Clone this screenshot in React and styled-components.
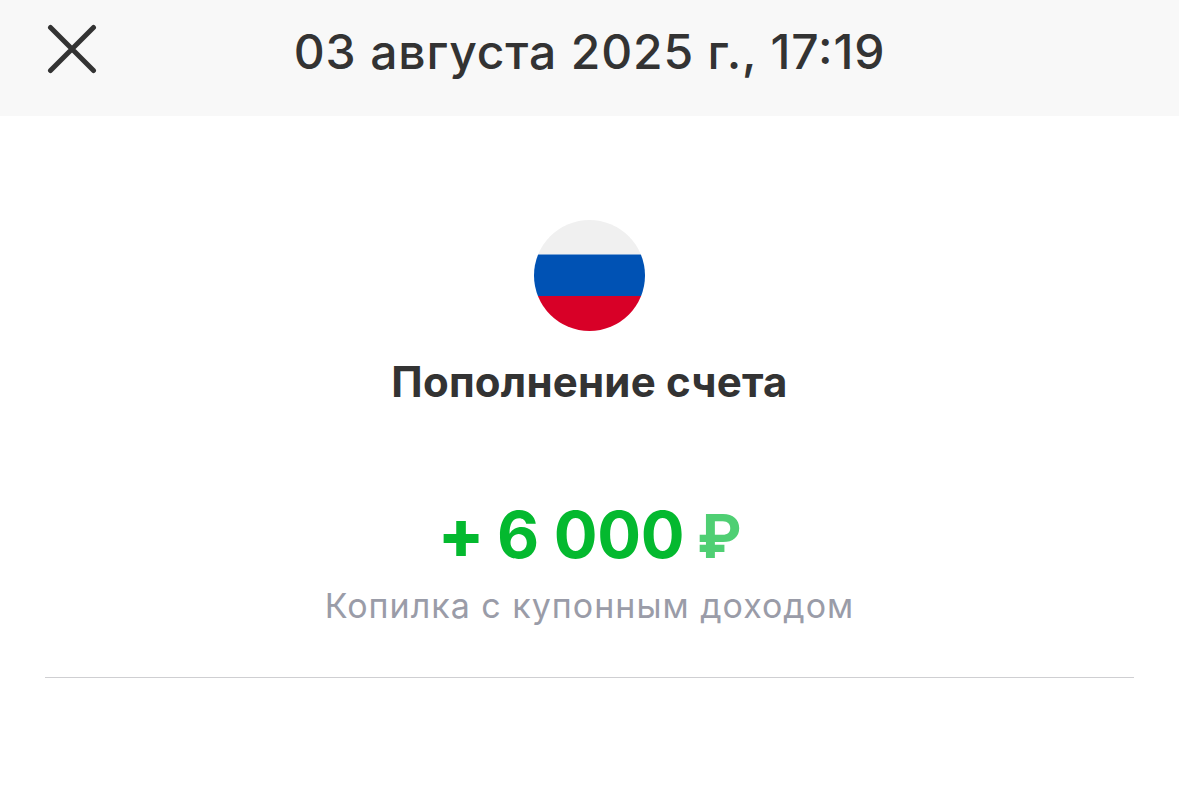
import styled, { createGlobalStyle } from 'styled-components';

const GlobalStyle = createGlobalStyle`
  html, body {
    margin: 0;
    padding: 0;
    height: 100%;
    background: #fff;
    font-family: Inter, "Noto Sans", "Liberation Sans", sans-serif;
  }
`;

const Page = styled.div`
  display: flex;
  flex-flow: column nowrap;
  height: 797px;
  overflow: hidden;
`;

const Header = styled.header`
  position: relative;
  display: flex;
  justify-content: center;
  align-items: center;
  height: 116px;
  background: #f8f8f8;
`;

const CloseButton = styled.button`
  position: absolute;
  left: 47px;
  top: 24px;
  display: block;
  width: 50px;
  height: 50px;
  padding: 0;
  border: 0;
  background: none;
`;

const DateTitle = styled.h1`
  margin: 0 0 13px;
  font-size: 48px;
  font-weight: 500;
  line-height: 56px;
  letter-spacing: 0.85px;
  font-feature-settings: "calt" 1;
  color: #333;
`;

const Operation = styled.section`
  display: flex;
  flex-flow: column nowrap;
  align-items: center;
  margin: 0 45px;
  padding-top: 104px;
  height: 457px;
  border-bottom: 1px solid #cfcfd2;
`;

const Flag = styled.svg`
  display: block;
  width: 111px;
  height: 111px;
`;

const OperationName = styled.h2`
  margin: 26px 0 0;
  font-size: 42px;
  font-weight: 700;
  line-height: 50px;
  letter-spacing: 0.2px;
  color: #333;
`;

const Amount = styled.div`
  display: flex;
  align-items: baseline;
  margin-top: 86px;
  font-size: 65px;
  font-weight: 700;
  line-height: 80px;
  letter-spacing: -0.4px;
  color: #04b92f;
`;

const Sign = styled.span`
  margin-right: 13px;
  font-size: 68px;
  font-weight: 800;
`;

const Currency = styled.span`
  margin-left: 13px;
  font-size: 60px;
  font-weight: 700;
  color: #4fcf73;
`;

const Product = styled.div`
  margin-top: 8px;
  font-size: 34px;
  font-weight: 400;
  line-height: 44px;
  letter-spacing: 1px;
  color: #9a9ca8;
`;

export default function App() {
  return (
    <Page>
      <GlobalStyle />
      <Header>
        <CloseButton aria-label="Закрыть">
          <svg width="50" height="50" viewBox="0 0 50 50" fill="none">
            <path d="M3.5 3.5 46.5 46.5M46.5 3.5 3.5 46.5" stroke="#333" strokeWidth="5" strokeLinecap="round" />
          </svg>
        </CloseButton>
        <DateTitle>03 августа 2025 г., 17:19</DateTitle>
      </Header>
      <Operation>
        <Flag viewBox="0 0 111 111">
          <defs>
            <clipPath id="flag-circle">
              <circle cx="55.5" cy="55.5" r="55.5" />
            </clipPath>
          </defs>
          <g clipPath="url(#flag-circle)">
            <rect width="111" height="34.5" fill="#f0f0f0" />
            <rect y="34.5" width="111" height="41.5" fill="#0052b4" />
            <rect y="76" width="111" height="35" fill="#d80027" />
          </g>
        </Flag>
        <OperationName>Пополнение счета</OperationName>
        <Amount>
          <Sign>+</Sign>
          <span>6 000</span>
          <Currency>₽</Currency>
        </Amount>
        <Product>Копилка с купонным доходом</Product>
      </Operation>
    </Page>
  );
}
